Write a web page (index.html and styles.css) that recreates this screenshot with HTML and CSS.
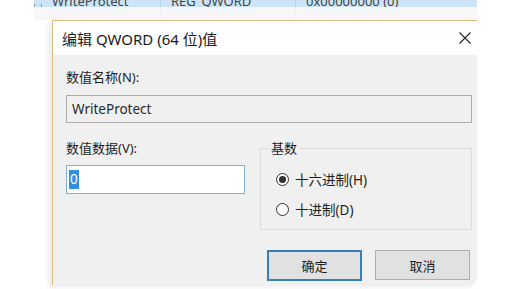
FILE: index.html
```html
<!DOCTYPE html>
<html lang="zh-CN">
<head>
  <meta charset="UTF-8" />
  <title>编辑 QWORD (64 位)值</title>
  <link rel="stylesheet" href="styles.css">
</head>
<body>
  <div class="list-row">
    <div class="cell cell-name"><span class="reg-icon"></span><span class="cut">WriteProtect</span></div>
    <div class="cell cell-type"><span class="cut">REG_QWORD</span></div>
    <div class="cell cell-data"><span class="cut">0x00000000 (0)</span></div>
  </div>
  <div class="list-gap">
    <div class="gap-col gap-name"></div>
    <div class="gap-col gap-type"></div>
    <div class="gap-col"></div>
  </div>

  <div class="dialog">
    <div class="title-bar">
      <div class="title">编辑 QWORD (64 位)值</div>
      <div class="close">
        <svg width="12" height="12" viewBox="0 0 12 12">
          <path d="M0.5 0.5 L11.5 11.5 M11.5 0.5 L0.5 11.5" stroke="#222" stroke-width="1.1" fill="none" />
        </svg>
      </div>
    </div>

    <div class="body">
      <div class="label">数值名称(N):</div>
      <div class="name-box">WriteProtect</div>

      <div class="data-row">
        <div class="data-col">
          <div class="label">数值数据(V):</div>
          <div class="data-box"><span class="selected">0</span></div>
        </div>
        <fieldset class="base">
          <legend>基数</legend>
          <div class="radio-row"><span class="radio checked"></span>十六进制(H)</div>
          <div class="radio-row"><span class="radio"></span>十进制(D)</div>
        </fieldset>
      </div>

      <div class="buttons">
        <button class="btn btn-default">确定</button>
        <button class="btn">取消</button>
      </div>
    </div>
  </div>
</body>
</html>
```

FILE: styles.css
```css
* {
  box-sizing: border-box;
  margin: 0;
  padding: 0;
}

body {
  background: #fff;
  width: 517px;
  height: 289px;
  overflow: hidden;
  font-family: "Noto Sans", "Noto Sans CJK SC", sans-serif;
  font-size: 13px;
  color: #1e1e1e;
}

/* registry list row peeking above the dialog */
.list-row {
  display: flex;
  margin-left: 34px;
  width: 443px;
  height: 7px;
  background: #cce4f5;
  overflow: hidden;
}

.cell {
  height: 7px;
  overflow: hidden;
  border-right: 1px solid #b8d3e8;
  display: flex;
  align-items: flex-end;
}

.cell-name {
  width: 127px;
}

.cell-type {
  width: 135px;
  padding-left: 10px;
}

.cell-data {
  flex: 1;
  border-right: none;
  padding-left: 10px;
}

.cut {
  display: block;
  line-height: 16px;
  margin-bottom: -2px;
  color: #444;
  white-space: nowrap;
}

.reg-icon {
  display: block;
  width: 8px;
  height: 4px;
  margin: 0 10px -1px 0;
  border: 1px solid #8a9bb0;
  border-top: none;
}

.list-gap {
  display: flex;
  margin-left: 34px;
  width: 443px;
  height: 13px;
  background: linear-gradient(#f4f8fb, #fbf7f7);
}

.gap-col {
  height: 13px;
}

.gap-name {
  width: 127px;
  border-right: 1px solid #eef0f2;
}

.gap-type {
  width: 135px;
  border-right: 1px solid #eef0f2;
}

/* dialog */
.dialog {
  margin-left: 52px;
  width: 425px;
  height: 265px;
  border-top: 1px solid #d9bd86;
  border-left: 1px solid #d9bd86;
  border-bottom-right-radius: 8px;
  background: #f0f0f0;
  box-shadow: -4px 2px 6px rgba(0, 0, 0, 0.08);
  overflow: hidden;
}

.title-bar {
  height: 34px;
  background: #fff;
  display: flex;
  align-items: center;
  justify-content: space-between;
  padding: 0 6px 0 9px;
}

.title {
  font-size: 15px;
  color: #1a1a1a;
}

.close {
  width: 12px;
  height: 12px;
  display: flex;
}

.body {
  padding: 12px 5px 0 13px;
}

.label {
  line-height: 20px;
  height: 20px;
}

.name-box {
  margin-top: 8px;
  height: 28px;
  border: 1px solid #adadad;
  background: #f0f0f0;
  padding-left: 5px;
  line-height: 26px;
  font-size: 13.5px;
  color: #2a2a2a;
}

.data-row {
  display: flex;
  gap: 15px;
  margin-top: 15px;
}

.data-col {
  width: 179px;
}

.data-box {
  margin-top: 7px;
  height: 29px;
  border: 1px solid #7fb2d6;
  background: #fff;
  padding: 4px 0 0 2px;
}

.selected {
  display: inline-block;
  height: 19px;
  line-height: 19px;
  padding: 0 1px;
  background: #3390e0;
  color: #fff;
  font-size: 13.5px;
}

.base {
  flex: 1;
  border: 1px solid #dcdcdc;
  padding: 11px 0 10px 15px;
}

.base legend {
  margin-left: -7px;
  padding: 0 2px;
  line-height: 20px;
}

.radio-row {
  display: flex;
  align-items: center;
  gap: 6px;
  height: 20px;
  font-size: 13.5px;
}

.radio-row + .radio-row {
  margin-top: 10px;
}

.radio {
  width: 13px;
  height: 13px;
  border: 1px solid #333;
  border-radius: 50%;
  background: #fff;
  display: flex;
  align-items: center;
  justify-content: center;
}

.radio.checked::after {
  content: "";
  width: 7px;
  height: 7px;
  border-radius: 50%;
  background: #333;
}

.buttons {
  display: flex;
  justify-content: flex-end;
  gap: 13px;
  margin-top: 20px;
  padding-right: 2px;
}

.btn {
  width: 95px;
  height: 30px;
  background: #e1e1e1;
  border: 1px solid #adadad;
  font-family: "Noto Sans", "Noto Sans CJK SC", sans-serif;
  font-size: 13px;
  color: #1e1e1e;
}

.btn-default {
  border: 2px solid #3a7fb3;
  height: 31px;
}
```
